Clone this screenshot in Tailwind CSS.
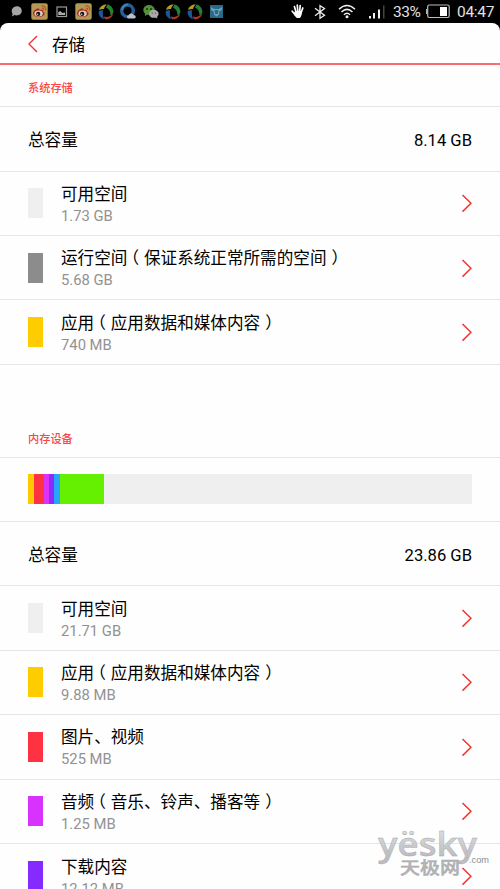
<!DOCTYPE html>
<html lang="zh-CN">
<head>
<meta charset="utf-8">
<title>存储</title>
<script src="https://cdn.jsdelivr.net/npm/@tailwindcss/browser@4"></script>
</head>
<body class="bg-black">
<svg class="hidden">
  <symbol id="chev" viewBox="0 0 12 20"><path d="M2.500 2 L11 10.300 L2.500 18.600" fill="none" stroke="#f5322f" stroke-width="1.500"/></symbol>
  <symbol id="weibo" viewBox="0 0 17 17">
    <rect x=".3" y=".3" width="16.4" height="16.4" rx="2" fill="#b39a54"/>
    <path d="M2 10.5 C2 7.5 6 4.8 8 5.6 C8.8 6 8.4 7 8.4 7.2 C11 6.4 12.3 7 12 8.4 C14 9 14 11 12.8 12.2 C10 15 2.400 14.500 2 10.500Z" fill="#ad2420"/>
    <ellipse cx="7.6" cy="10.6" rx="4.200" ry="3" fill="#d8cfc0"/>
    <circle cx="7.200" cy="10.900" r="2.100" fill="#15100c"/><circle cx="6.700" cy="11.200" r=".7" fill="#ddd"/>
    <path d="M10.500 3 C13.500 2.500 15.300 4.800 14.500 7.500 M10.800 5.200 C12.300 5 13 6 12.600 7.100" fill="none" stroke="#c0541c" stroke-width="1.200"/>
  </symbol>
  <symbol id="ball" viewBox="0 0 16 16">
    <path d="M1 6 C2 2.500 5 .5 9 .6 C7 2 6.500 3.500 6 5 C4.500 5 2.500 5.200 1 6Z" fill="#b39e25"/>
    <path d="M9.500 .6 C13 1.200 15.500 4.500 15.400 8.500 C14.500 10 13.500 11 12.500 11.600 C12.500 8 11.500 5 8 3.500Z" fill="#258136"/>
    <path d="M15.200 9.800 C14.300 13.500 11 15.500 7.500 15.400 C6.500 14.500 6 13.500 5.800 12.500 C9.500 13.500 12.500 12.500 15.200 9.800Z" fill="#b0371f"/>
    <path d="M.7 7.200 C.2 11 2.500 14 6 15.200 C5 12.500 4.600 9.500 5 6.300 C3.500 6 2 6.200 .7 7.200Z" fill="#1e569c"/>
  </symbol>
</svg>
<main class="relative flex h-[889px] w-[500px] flex-col overflow-hidden bg-black font-['Roboto','Noto_Sans_CJK_SC',sans-serif] text-black">
  <!-- status bar -->
  <header class="flex h-[23px] shrink-0 items-center justify-between pl-[10px] pr-[6px]">
    <div class="flex items-center">
      <svg class="mr-[8px] h-[13px] w-[13px]" viewBox="0 0 13 13"><path d="M6.700 1.200 C9.700 1.200 11.800 3.200 11.800 5.800 C11.800 8.500 9.700 10.500 6.700 10.500 C5.800 10.500 5 10.300 4.500 10 L2 11.500 L2.600 8.800 C.3 5 3 1.200 6.700 1.200Z" fill="#a5a5a5"/></svg>
      <svg class="mr-[8px] h-[17px] w-[17px]"><use href="#weibo"/></svg>
      <svg class="mr-[7px] h-[12px] w-[12px]" viewBox="0 0 12 12"><rect x="1" y="1" width="9.500" height="9.500" fill="none" stroke="#999" stroke-width="1.200"/><path d="M2.300 9 V6 L4.300 5 L6.300 7 L9 6.500 V9Z" fill="#aaa"/></svg>
      <svg class="mr-[6px] h-[17px] w-[17px]"><use href="#weibo"/></svg>
      <svg class="mr-[6px] h-[16px] w-[16px]"><use href="#ball"/></svg>
      <svg class="mr-[6px] h-[17px] w-[17px]" viewBox="0 0 17 17"><circle cx="7.500" cy="7.800" r="5.800" fill="none" stroke="#285e98" stroke-width="3.400"/><path d="M2 7 A6 6 0 0 1 8 1.500" fill="none" stroke="#4386b3" stroke-width="2"/><path d="M8.500 15.500 C6.500 15 6.500 12.500 8.800 12.300 C9.500 9.800 13 9.800 13.500 12 C16.300 12 16.500 15.500 14 15.500Z" fill="#b9c2ca"/></svg>
      <svg class="mr-[6px] h-[16px] w-[16px]" viewBox="0 0 16 16"><ellipse cx="6" cy="6" rx="5.700" ry="4.900" fill="#55903a"/><path d="M2 9 L2 12 L5 10Z" fill="#55903a"/><circle cx="4" cy="5" r=".9" fill="#172710"/><circle cx="8" cy="5" r=".9" fill="#172710"/><ellipse cx="10.800" cy="9.800" rx="4.800" ry="4" fill="#a7aaa5"/><path d="M12 13 L14.300 14.800 L14 12Z" fill="#a7aaa5"/><circle cx="9.200" cy="9" r=".6" fill="#333"/><circle cx="12.500" cy="9" r=".6" fill="#333"/></svg>
      <svg class="mr-[6px] h-[16px] w-[16px]"><use href="#ball"/></svg>
      <svg class="mr-[7px] h-[16px] w-[16px]"><use href="#ball"/></svg>
      <svg class="h-[13px] w-[13px]" viewBox="0 0 13 13"><rect width="13" height="13" fill="#286b89"/><path d="M.8 2 L4 4 H9 L12.200 2 L11.500 5.500 L9.500 6 L9 9.500 L6.500 11.500 L4 9.500 L3.500 6 L1.500 5.500Z" fill="#75a4b8"/><path d="M4.500 5 H8.500 L8 9 H5Z" fill="#286b89"/></svg>
    </div>
    <div class="flex items-center">
      <svg class="mr-[9px] h-[15px] w-[14px]" viewBox="0 0 14 15"><g stroke="#fff" stroke-width="1.700" stroke-linecap="round" fill="none"><path d="M5 8 L3.400 2.500 M6.800 7.500 L6.300 1.200 M8.600 8 L9.200 1.700 M10 9 L11.800 4 M4 10.500 L1.200 7.200"/></g><path d="M4.200 7 H10.800 C11 10 10.500 12 9 14 H5.800 C4.600 12.500 3 11.500 2.500 9.500Z" fill="#fff"/></svg>
      <svg class="mr-[12px] h-[16px] w-[12px]" viewBox="0 0 12 16"><path d="M1 4.200 L10.500 11.300 L6 14.300 V1.700 L10.500 4.500 L1 11.800" fill="none" stroke="#ececec" stroke-width="1.300"/></svg>
      <svg class="mr-[12px] h-[15px] w-[18px]" viewBox="0 0 18 15"><g fill="none" stroke="#eee" stroke-width="1.500"><path d="M1 5.200 Q9 -2.200 17 5.200 M3.500 8 Q9 2.800 14.500 8 M6 10.700 Q9 7.800 12 10.700"/></g><circle cx="9" cy="12.700" r="1.500" fill="#eee"/></svg>
      <svg class="mr-[8px] h-[14px] w-[17px]" viewBox="0 0 17 14"><path d="M1 11h2v2.500h-2z M5 8h2v5.500h-2z M10 4.500h2v9h-2z" fill="#eee"/><path d="M15 .5h1.500v13h-1.500z" fill="#444"/></svg>
      <span class="mr-[5px] w-[28px] whitespace-nowrap pt-[2px] text-[15.5px] leading-[21px] tracking-[-0.4px] text-[#e2e2e2]">33%</span>
      <svg class="mr-[7px] h-[15px] w-[24px]" viewBox="0 0 24 15"><rect x="1.700" y="1" width="21.500" height="12.500" rx="1.500" fill="none" stroke="#bbb" stroke-width="1.200"/><path d="M.6 5 V10" stroke="#ccc"/><path d="M14 3h7v9h-7z" fill="#fff"/></svg>
      <span class="w-[37px] whitespace-nowrap pt-[2px] text-[15.5px] leading-[21px] tracking-[-0.3px] text-[#e2e2e2]">04:47</span>
    </div>
  </header>

  <div class="flex min-h-0 flex-1 flex-col rounded-t-[8px] bg-[#fefefe]">
    <div class="flex h-[42px] shrink-0 items-center border-b-2 border-[#f66e6b] pl-[28px]">
      <svg class="mr-[14px] mt-[2px] h-[18px] w-[10px]" viewBox="0 0 10 18"><path d="M9 1 L1 9 L9 17" fill="none" stroke="#f5322f" stroke-width="1.400"/></svg>
      <h1 class="pt-[5px] text-[16.6px] leading-[24px]">存储</h1>
    </div>

    <h2 class="h-[42px] shrink-0 border-b border-[#e6e6e6] pl-[28px] pt-[4px] text-[11.2px] font-medium leading-[40px] text-[#fb4547]">系统存储</h2>
    <div class="flex h-[64.6px] shrink-0 items-center justify-between border-b border-[#e6e6e6] px-[28px] pt-[5px] text-[16.6px]"><span>总容量</span><span>8.14 GB</span></div>
    <div class="flex h-[64.4px] shrink-0 items-center border-b border-[#e6e6e6] px-[28px]">
      <i class="mr-[18px] h-[30px] w-[15px] bg-[#efefef]"></i>
      <div class="flex-1"><p class="pt-[1px] text-[16.6px] leading-[24px]">可用空间</p><p class="text-[14.8px] leading-[18px] text-[#929292]">1.73 GB</p></div>
      <svg class="h-[20px] w-[12px]"><use href="#chev"/></svg>
    </div>
    <div class="flex h-[64.4px] shrink-0 items-center border-b border-[#e6e6e6] px-[28px]">
      <i class="mr-[18px] h-[30px] w-[15px] bg-[#8c8c8c]"></i>
      <div class="flex-1"><p class="pt-[1px] text-[16.6px] leading-[24px]">运行空间<span class="inline-block -translate-x-[5px]">（</span>保证系统正常所需的空间<span class="inline-block translate-x-[5px]">）</span></p><p class="text-[14.8px] leading-[18px] text-[#929292]">5.68 GB</p></div>
      <svg class="h-[20px] w-[12px]"><use href="#chev"/></svg>
    </div>
    <div class="flex h-[64.4px] shrink-0 items-center border-b border-[#e6e6e6] px-[28px]">
      <i class="mr-[18px] h-[30px] w-[15px] bg-[#ffcc00]"></i>
      <div class="flex-1"><p class="pt-[1px] text-[16.6px] leading-[24px]">应用<span class="inline-block -translate-x-[5px]">（</span>应用数据和媒体内容<span class="inline-block translate-x-[5px]">）</span></p><p class="text-[14.8px] leading-[18px] text-[#929292]">740 MB</p></div>
      <svg class="h-[20px] w-[12px]"><use href="#chev"/></svg>
    </div>

    <h2 class="mt-[50.800px] h-[42px] shrink-0 border-b border-[#e6e6e6] pl-[28px] pt-[4px] text-[11.2px] font-medium leading-[40px] text-[#fb4547]">内存设备</h2>
    <div class="flex h-[64.4px] shrink-0 items-center border-b border-[#e6e6e6] px-[28px]">
      <div class="flex h-[30px] flex-1 bg-[#efefef]">
        <i class="w-[5.500px] bg-[#ffc800]"></i><i class="w-[10px] bg-[#ff3241]"></i><i class="w-[5px] bg-[#dc32f5]"></i><i class="w-[5.500px] bg-[#8a2bff]"></i><i class="w-[6px] bg-[#28a5ff]"></i><i class="w-[44px] bg-[#64f000]"></i>
      </div>
    </div>
    <div class="flex h-[64.4px] shrink-0 items-center justify-between border-b border-[#e6e6e6] px-[28px] pt-[5px] text-[16.6px]"><span>总容量</span><span>23.86 GB</span></div>
    <div class="flex h-[64.4px] shrink-0 items-center border-b border-[#e6e6e6] px-[28px]">
      <i class="mr-[18px] h-[30px] w-[15px] bg-[#efefef]"></i>
      <div class="flex-1"><p class="pt-[1px] text-[16.6px] leading-[24px]">可用空间</p><p class="text-[14.8px] leading-[18px] text-[#929292]">21.71 GB</p></div>
      <svg class="h-[20px] w-[12px]"><use href="#chev"/></svg>
    </div>
    <div class="flex h-[64.4px] shrink-0 items-center border-b border-[#e6e6e6] px-[28px]">
      <i class="mr-[18px] h-[30px] w-[15px] bg-[#ffcc00]"></i>
      <div class="flex-1"><p class="pt-[1px] text-[16.6px] leading-[24px]">应用<span class="inline-block -translate-x-[5px]">（</span>应用数据和媒体内容<span class="inline-block translate-x-[5px]">）</span></p><p class="text-[14.8px] leading-[18px] text-[#929292]">9.88 MB</p></div>
      <svg class="h-[20px] w-[12px]"><use href="#chev"/></svg>
    </div>
    <div class="flex h-[64.4px] shrink-0 items-center border-b border-[#e6e6e6] px-[28px]">
      <i class="mr-[18px] h-[30px] w-[15px] bg-[#ff3241]"></i>
      <div class="flex-1"><p class="pt-[1px] text-[16.6px] leading-[24px]">图片、视频</p><p class="text-[14.8px] leading-[18px] text-[#929292]">525 MB</p></div>
      <svg class="h-[20px] w-[12px]"><use href="#chev"/></svg>
    </div>
    <div class="flex h-[64.4px] shrink-0 items-center border-b border-[#e6e6e6] px-[28px]">
      <i class="mr-[18px] h-[30px] w-[15px] bg-[#d832ff]"></i>
      <div class="flex-1"><p class="pt-[1px] text-[16.6px] leading-[24px]">音频<span class="inline-block -translate-x-[5px]">（</span>音乐、铃声、播客等<span class="inline-block translate-x-[5px]">）</span></p><p class="text-[14.8px] leading-[18px] text-[#929292]">1.25 MB</p></div>
      <svg class="h-[20px] w-[12px]"><use href="#chev"/></svg>
    </div>
    <div class="flex h-[64.4px] shrink-0 items-center px-[28px]">
      <i class="mr-[18px] h-[30px] w-[15px] bg-[#862bff]"></i>
      <div class="flex-1"><p class="pt-[1px] text-[16.6px] leading-[24px]">下载内容</p><p class="text-[14.8px] leading-[18px] text-[#929292]">12.12 MB</p></div>
      <svg class="h-[20px] w-[12px]"><use href="#chev"/></svg>
    </div>
  </div>

  <!-- site watermark -->
  <svg class="absolute left-[370px] top-[820px] h-[69px] w-[130px]" viewBox="0 0 130 69">
    <defs><linearGradient id="metal" x1="0" y1="0" x2="0" y2="1"><stop offset=".2" stop-color="#dcdcde"/><stop offset=".8" stop-color="#bcbdc1"/></linearGradient></defs>
    <g fill="url(#metal)" stroke="#a5a6aa" stroke-width=".4">
      <text x="8" y="36" font-family="Open Sans, sans-serif" font-weight="600" font-size="33" textLength="99" lengthAdjust="spacingAndGlyphs">yësky</text>
      <text x="30" y="54" font-family="Noto Sans CJK SC, sans-serif" font-weight="500" font-size="16.500" textLength="60" lengthAdjust="spacingAndGlyphs" fill="#b4b5b8">天极网</text>
    </g>
    <text x="99" y="43" font-family="Liberation Sans, sans-serif" font-size="9.500" fill="#8d8d90" textLength="20" lengthAdjust="spacingAndGlyphs">.com</text>
  </svg>
</main>
</body>
</html>
